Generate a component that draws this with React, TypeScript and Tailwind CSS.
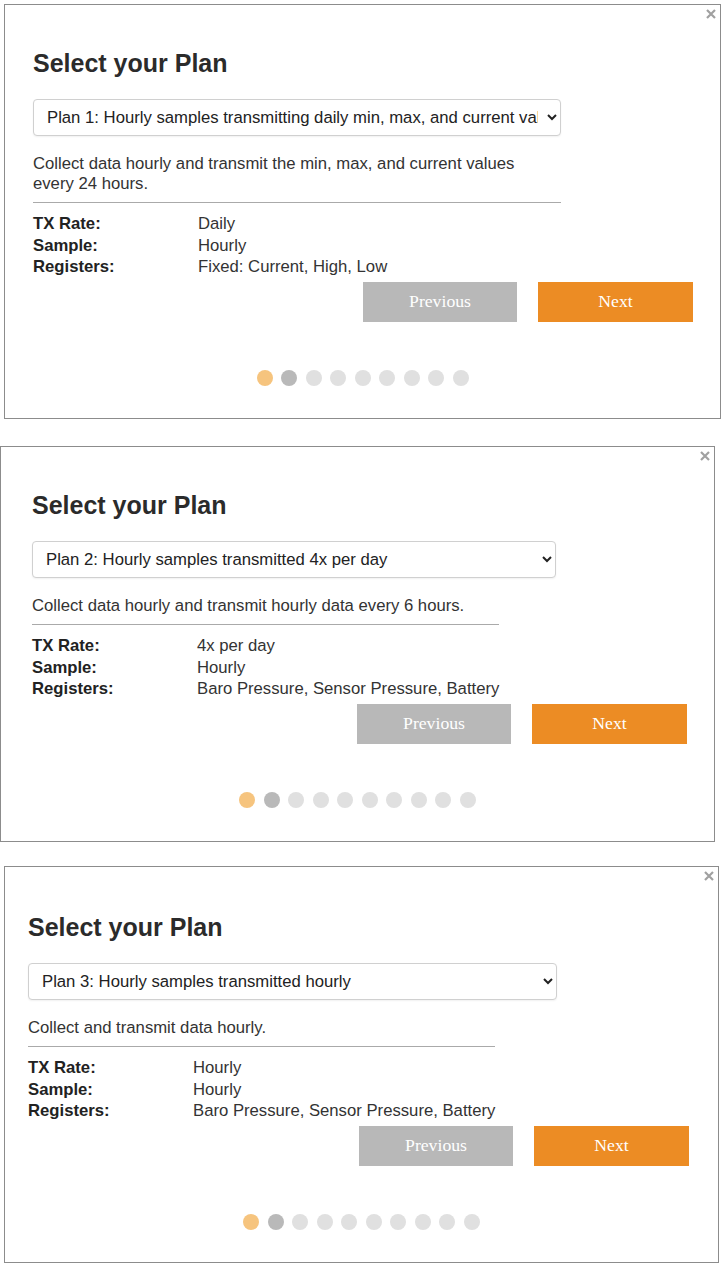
import React from 'react'

type Plan = {
  label: string
  description: string
  txRate: string
  sample: string
  registers: string
  dots: number
  // per-screenshot layout tweaks
  wrap: string
  pad: string
  selectWidth: string
}

const PLANS: Plan[] = [
  {
    label: 'Plan 1: Hourly samples transmitting daily min, max, and current values',
    description: 'Collect data hourly and transmit the min, max, and current values every 24 hours.',
    txRate: 'Daily',
    sample: 'Hourly',
    registers: 'Fixed: Current, High, Low',
    dots: 9,
    wrap: 'mt-[4px] ml-[4px] w-[717px] h-[415px]',
    pad: 'pl-[28px] pr-[27px] pt-[45px]',
    selectWidth: 'w-[528px]',
  },
  {
    label: 'Plan 2: Hourly samples transmitted 4x per day',
    description: 'Collect data hourly and transmit hourly data every 6 hours.',
    txRate: '4x per day',
    sample: 'Hourly',
    registers: 'Baro Pressure, Sensor Pressure, Battery',
    dots: 10,
    wrap: 'mt-[27px] ml-0 w-[715px] h-[396px]',
    pad: 'pl-[31px] pr-[27px] pt-[45px]',
    selectWidth: 'w-[524px]',
  },
  {
    label: 'Plan 3: Hourly samples transmitted hourly',
    description: 'Collect and transmit data hourly.',
    txRate: 'Hourly',
    sample: 'Hourly',
    registers: 'Baro Pressure, Sensor Pressure, Battery',
    dots: 10,
    wrap: 'mt-[24px] ml-[4px] w-[715px] h-[397px]',
    pad: 'pl-[23px] pr-[29px] pt-[47px]',
    selectWidth: 'w-[529px]',
  },
]

function Dots({ count }: { count: number }) {
  return (
    <div className="flex justify-center gap-[8.5px]">
      {Array.from({ length: count }).map((_, i) => (
        <span
          key={i}
          className={
            i === 0
              ? 'h-[16px] w-[16px] rounded-full bg-[#f6c47e]'
              : i === 1
                ? 'h-[16px] w-[16px] rounded-full bg-[#b9b9b9]'
                : 'h-[16px] w-[16px] rounded-full bg-[#e0e0e0]'
          }
        />
      ))}
    </div>
  )
}

function PlanCard({ plan }: { plan: Plan }) {
  return (
    <div className={`relative flex flex-col border border-[#8c8c8c] bg-white ${plan.wrap}`}>
      <svg
        className="absolute right-[4px] top-[4px] h-[10px] w-[10px]"
        viewBox="0 0 10 10"
        fill="none"
        stroke="#a0a0a0"
        strokeWidth="2.2"
      >
        <path d="M1 1l8 8M9 1l-8 8" />
      </svg>

      <div className={`flex flex-col ${plan.pad}`}>
        <h2 className="text-[25px] font-bold leading-[27px] text-[#2b2b2b]">Select your Plan</h2>

        <select
          defaultValue="0"
          className={`mt-[22px] h-[37px] rounded-[4px] border border-[#d0d0d0] bg-white pl-[9px] pr-[6px] text-[16.7px] text-[#222] shadow-[0_1px_2px_rgba(0,0,0,0.06)] ${plan.selectWidth}`}
        >
          <option value="0">{plan.label}</option>
        </select>

        <div className="mt-[18px] w-fit max-w-[528px] text-[16.7px] leading-[20px] text-[#333]">
          <p className="border-b border-[#aaaaaa] pb-[8px] pr-[14px]">{plan.description}</p>
          <div className="mt-[10px] grid grid-cols-[165px_auto] leading-[21.5px]">
            <span className="font-bold text-[#222]">TX Rate:</span>
            <span>{plan.txRate}</span>
            <span className="font-bold text-[#222]">Sample:</span>
            <span>{plan.sample}</span>
            <span className="font-bold text-[#222]">Registers:</span>
            <span className="whitespace-nowrap">{plan.registers}</span>
          </div>
        </div>

        <div className="mt-[4px] flex justify-end gap-[21px]">
          <button className="h-[40px] w-[154px] bg-[#b8b8b8] font-['Liberation_Serif',serif] text-[17.7px] text-white">
            Previous
          </button>
          <button className="h-[40px] w-[155px] bg-[#ec8c24] font-['Liberation_Serif',serif] text-[17.7px] text-white">
            Next
          </button>
        </div>
      </div>

      <div className="mt-[48px]">
        <Dots count={plan.dots} />
      </div>
    </div>
  )
}

export default function App() {
  return (
    <div className="min-h-[1266px] w-[723px] bg-white pb-[4px] font-['Liberation_Sans',Arial,sans-serif]">
      {PLANS.map((p, i) => (
        <PlanCard key={i} plan={p} />
      ))}
    </div>
  )
}
